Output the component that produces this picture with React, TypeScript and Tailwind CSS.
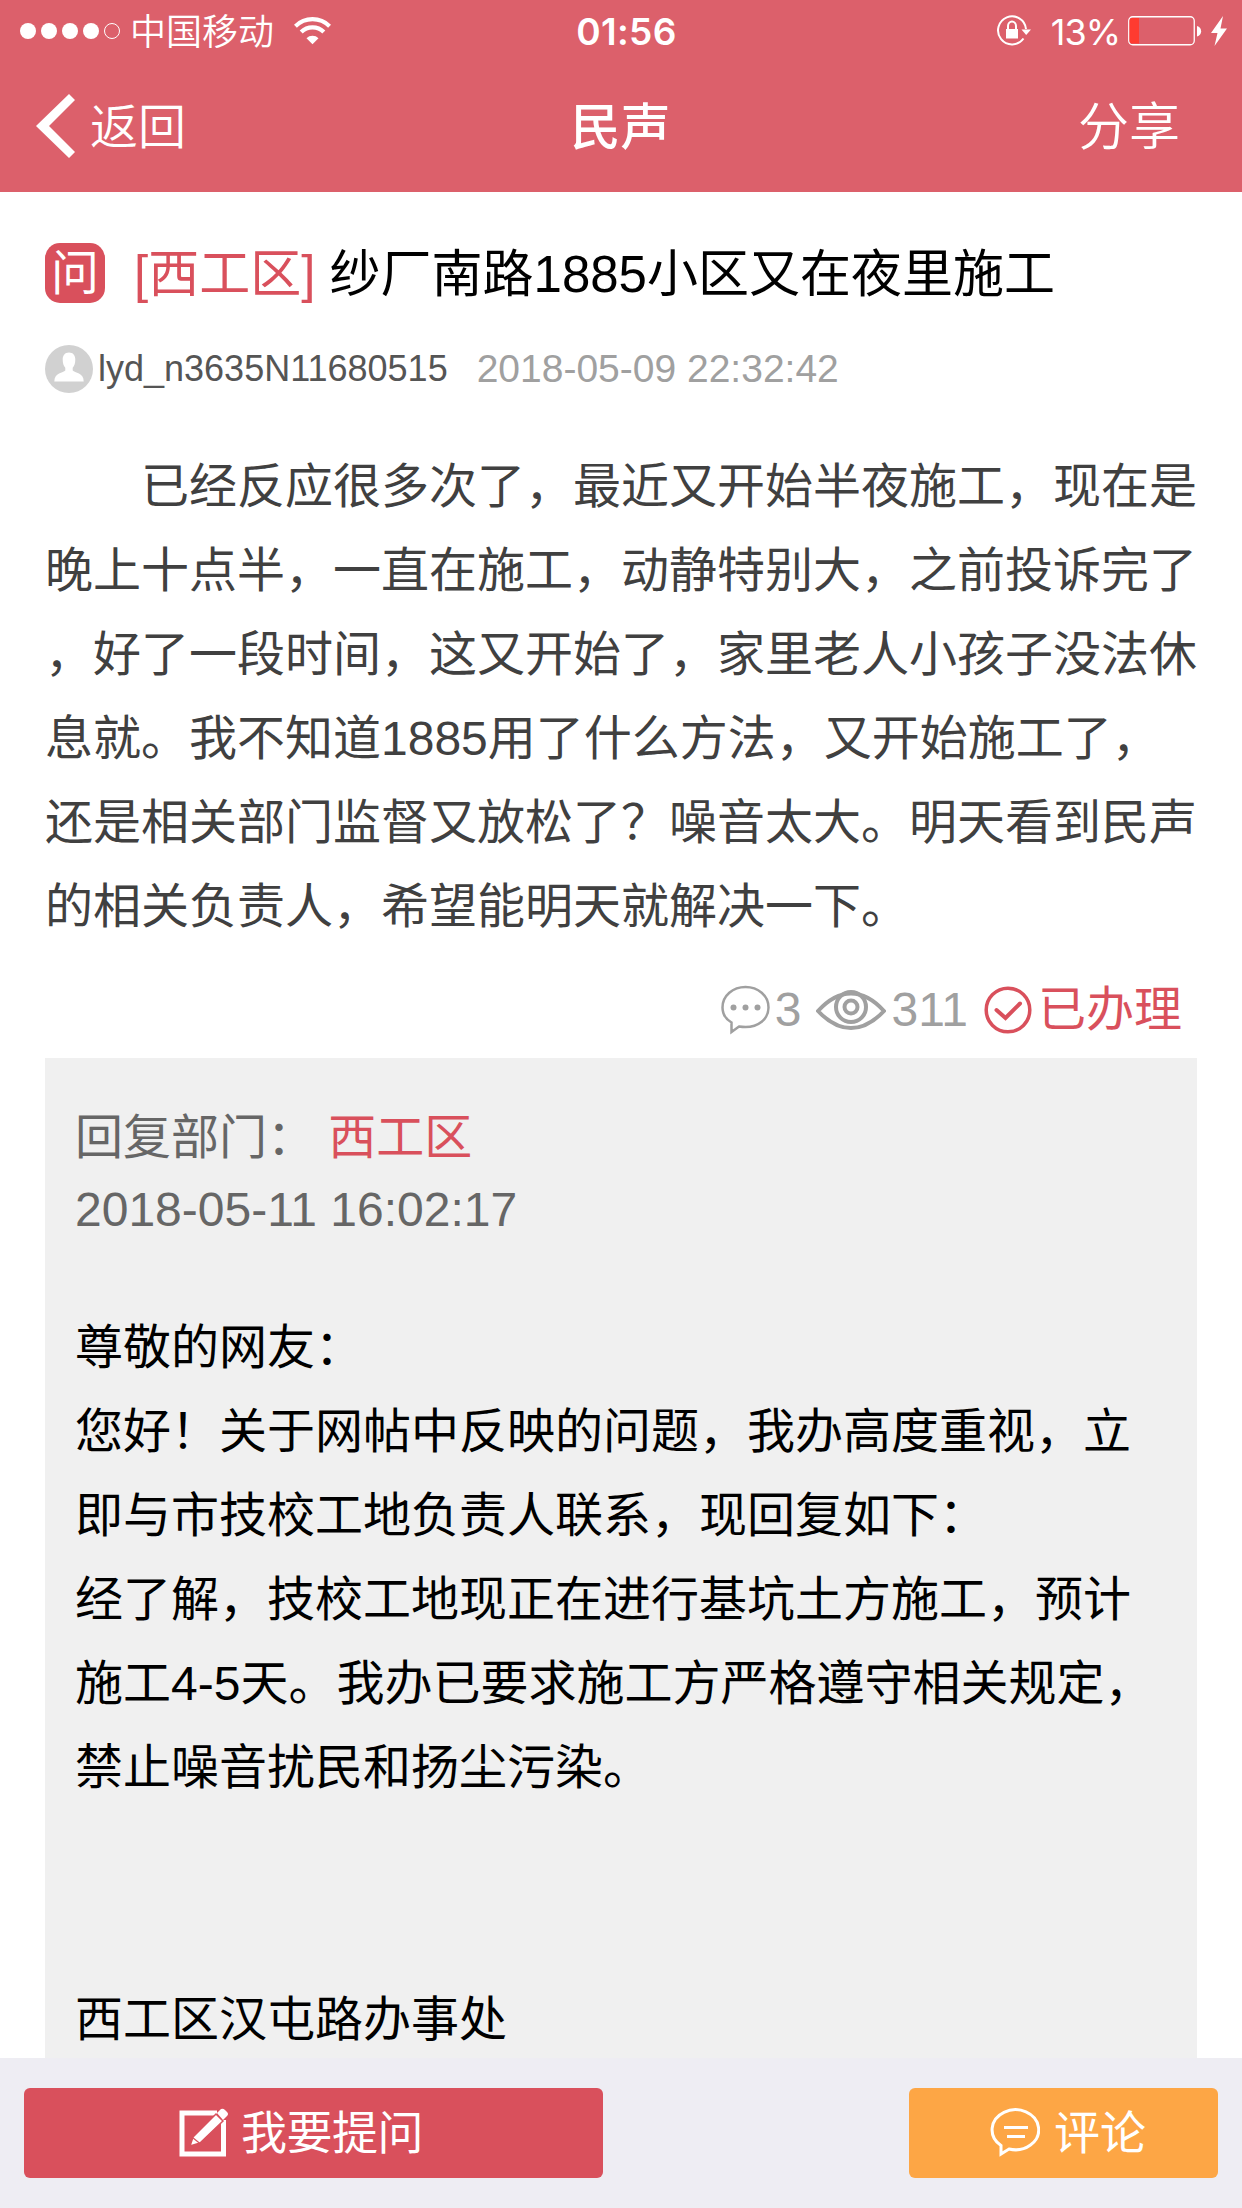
import type { ReactNode } from "react";

const question = [
  "　　已经反应很多次了，最近又开始半夜施工，现在是",
  "晚上十点半，一直在施工，动静特别大，之前投诉完了",
  "，好了一段时间，这又开始了，家里老人小孩子没法休",
  "息就。我不知道1885用了什么方法，又开始施工了，",
  "还是相关部门监督又放松了？噪音太大。明天看到民声",
  "的相关负责人，希望能明天就解决一下。",
];

const reply = [
  "尊敬的网友：",
  "您好！关于网帖中反映的问题，我办高度重视，立",
  "即与市技校工地负责人联系，现回复如下：",
  "经了解，技校工地现正在进行基坑土方施工，预计",
  "施工4-5天。我办已要求施工方严格遵守相关规定，",
  "禁止噪音扰民和扬尘污染。",
  "",
  "",
  "西工区汉屯路办事处",
];

function Lines({ lines }: { lines: string[] }): ReactNode {
  return lines.map((line, i) => (
    <p key={i} className="h-[84px] whitespace-pre text-5xl leading-[84px]">
      {line}
    </p>
  ));
}

function StatusBar() {
  return (
    <div className="grid h-[60px] grid-cols-3 items-center pr-[15px] pl-[20px]">
      <div className="flex items-center">
        <svg className="h-[16px] w-[102px]" viewBox="0 0 102 16" fill="#fff">
          <circle cx="8" cy="8" r="8" />
          <circle cx="29" cy="8" r="8" />
          <circle cx="50" cy="8" r="8" />
          <circle cx="71" cy="8" r="8" />
          <circle cx="92" cy="8" r="7.5" fill="none" stroke="#fff" />
        </svg>
        <span className="ml-[8px] pt-[3px] text-4xl leading-[57px] font-[350]">中国移动</span>
        <svg className="ml-[20px] h-[28px] w-[37px]" viewBox="0 0 37 28" fill="none" stroke="#fff" strokeWidth="4.2">
          <path d="M1.4 9.2a24.2 24.2 0 0 1 34.2 0" />
          <path d="M7.2 15a16 16 0 0 1 22.6 0" />
          <path d="M12.5 21.3a8.5 8.5 0 0 1 12 0l-6 6z" fill="#fff" stroke="none" />
        </svg>
      </div>
      <div className="pt-[2px] pl-[6px] text-center font-[Inter] text-[37px] leading-[60px] font-semibold tracking-[.3px]">01:56</div>
      <div className="flex items-center justify-end">
        <svg className="h-[32px] w-[36px]" viewBox="0 0 36 32" fill="none" stroke="#fff" strokeWidth="2">
          <path d="M26.500 23.500A14 14 0 1 1 29 14" />
          <path d="M24.500 14.500h9.500l-4.800 5.500z" fill="#fff" stroke="none" />
          <path d="M9 14h12v9.500h-12z" fill="#fff" stroke="none" />
          <path d="M11 15v-4a4 4.500 0 0 1 8 0V15" />
        </svg>
        <span className="ml-[18px] pt-[2px] font-[Inter] text-[36px] leading-[60px] font-normal tracking-[-1px]">13%</span>
        <svg className="ml-[8px] h-[30px] w-[74px]" viewBox="0 0 74 30">
          <rect x=".75" y=".75" width="65.500" height="28" rx="4" fill="none" stroke="#fff" strokeWidth="1.3" />
          <path d="M4.500 2H11v25.500H4.500A3 3 0 0 1 1.500 24.500V5A3 3 0 0 1 4.500 2z" fill="#ff3b30" />
          <path d="M69 10c5.500 1 5.500 9.500 0 10.500z" fill="#fff" />
        </svg>
        <svg className="ml-[9px] h-[30px] w-[16px]" viewBox="0 0 16 30" fill="#fff">
          <path d="M12 0L0 17h6.500L3.500 30L16 12.500H9.500z" />
        </svg>
      </div>
    </div>
  );
}

export default function App() {
  return (
    <div className="flex h-[2208px] w-[1242px] flex-col overflow-hidden bg-white font-['Liberation_Sans','Noto_Sans_CJK_SC',sans-serif] font-normal">
      <header className="h-[192px] shrink-0 bg-[#dc606b] text-white">
        <StatusBar />
        <nav className="grid h-[132px] grid-cols-3 items-center pr-[62px] pl-[36px] font-[350]">
          <div className="flex items-center">
            <svg className="h-[64px] w-[39px]" viewBox="0 0 39 64" fill="#fff">
              <path d="M33 0l6 6L13 32l26 26l-6 6L0 32z" />
            </svg>
            <span className="ml-[15px] pt-[3px] text-5xl">返回</span>
          </div>
          <h1 className="pt-[4px] pl-[25px] text-center text-[50px] font-medium">民声</h1>
          <div className="pt-[4px] text-right text-[51px]">分享</div>
        </nav>
      </header>

      <main className="min-h-0 flex-1 overflow-hidden px-[45px] pt-[33px]">
        <div className="flex h-[96px] items-center">
          <span className="flex size-[60px] items-center justify-center rounded-[15px] bg-[#d9505c] pt-[2px] text-5xl leading-[58px] font-normal text-white">问</span>
          <h2 className="ml-[29px] pt-[3px] text-[51px] leading-[93px] whitespace-pre text-black">
            <span className="text-[#d9505c]">[西工区]</span> 纱厂南路1885小区又在夜里施工
          </h2>
        </div>

        <div className="mt-[15px] flex h-[66px] items-center">
          <svg className="size-[48px]" viewBox="0 0 48 48">
            <circle cx="24" cy="24" r="24" fill="#d1d1d1" />
            <path d="M24 7.500c4 0 6.300 2.800 6.300 7c0 4-1 6.300-2.600 8.300v2.700c2 2.500 11 2 11 11H9.300c0-9 9-8.500 11-11v-2.700c-1.600-2-2.600-4.300-2.600-8.300c0-4.200 2.300-7 6.300-7z" fill="#fff" />
          </svg>
          <span className="ml-[5px] text-4xl leading-[66px] text-[#555]">lyd_n3635N11680515</span>
          <span className="ml-[29px] text-[39px] leading-[64px] text-[#a0a0a0]">2018-05-09 22:32:42</span>
        </div>

        <section className="mt-[43px] text-[#404040]">
          <Lines lines={question} />
        </section>

        <div className="mt-[31px] flex h-[60px] items-center justify-end pr-[15px] text-5xl text-[#a0a0a0]">
          <svg className="h-[50px] w-[49px]" viewBox="0 0 49 50" fill="none" stroke="#a0a0a0" strokeWidth="2.5">
            <path d="M10.500 47V37.500C4.500 34 1.500 28.500 1.500 22.500C1.500 10.500 12 2 24.500 2S47.500 10.500 47.500 22.500S37 42 24.500 42C22 42 20 41.800 18 41.500z" />
            <g fill="#a0a0a0" stroke="none">
              <circle cx="12.500" cy="22.500" r="3" />
              <circle cx="24.500" cy="22.500" r="3" />
              <circle cx="36.500" cy="22.500" r="3" />
            </g>
          </svg>
          <span className="ml-[5px]">3</span>
          <svg className="ml-[15px] h-[40px] w-[70px]" viewBox="0 0 70 40" fill="none" stroke="#a0a0a0" strokeWidth="4">
            <path d="M2 21Q18 3.500 35 3.500T68 21Q52 38 35 38T2 21z" />
            <circle cx="35" cy="17" r="15" />
            <circle cx="35" cy="17" r="6.500" />
          </svg>
          <span className="ml-[5px]">311</span>
          <svg className="ml-[16px] size-[48px]" viewBox="0 0 48 48" fill="none" stroke="#d9505c" strokeWidth="3.5">
            <circle cx="24" cy="24" r="21.800" />
            <path d="M12.500 24l9 8L36 17.500" strokeWidth="4" strokeLinecap="round" />
          </svg>
          <span className="ml-[6px] font-normal text-[#d9505c]">已办理</span>
        </div>

        <section className="mt-[18px] h-[1200px] bg-[#f0f0f0] px-[30px] pt-[44px] text-black">
          <p className="h-[72px] text-5xl leading-[72px] font-normal whitespace-pre text-[#666]">
            回复部门： <span className="text-[#d9505c]">西工区</span>
          </p>
          <p className="h-[72px] text-5xl leading-[72px] text-[#666]">2018-05-11 16:02:17</p>
          <div className="mt-[60px]">
            <Lines lines={reply} />
          </div>
        </section>
      </main>

      <footer className="flex h-[150px] shrink-0 items-center justify-between bg-[#eeedf3] px-[24px] text-[46px] text-white">
        <button className="flex h-[90px] w-[579px] items-center rounded-md bg-[#d9505c] pl-[155px]">
          <svg className="h-[50px] w-[50px]" viewBox="0 0 50 50">
            <path d="M38 5H3V46H44.500V12" fill="none" stroke="#fff" strokeWidth="5" />
            <path d="M11 38l3-9L37 6l7 7L21 35z" fill="#fff" stroke="#d9505c" strokeWidth="1.5" />
            <path d="M38 5l4-4q2-1 4 1l2 2q2 2 0 4l-4 4z" fill="#fff" />
            <path d="M13.500 29.500l7.500 6" stroke="#d9505c" strokeWidth="1.2" />
          </svg>
          <span className="ml-[12px] tracking-[-.5px]">我要提问</span>
        </button>
        <button className="flex h-[90px] w-[309px] items-center rounded-md bg-[#fda645] pl-[81px]">
          <svg className="size-[50px]" viewBox="0 0 50 50" fill="none" stroke="#fff" strokeWidth="3">
            <path d="M11 46V37.500A23.300 20 0 1 1 19 41z" />
            <path d="M14 19.500h24M17 28.500h18" />
          </svg>
          <span className="ml-[14px]">评论</span>
        </button>
      </footer>
    </div>
  );
}
